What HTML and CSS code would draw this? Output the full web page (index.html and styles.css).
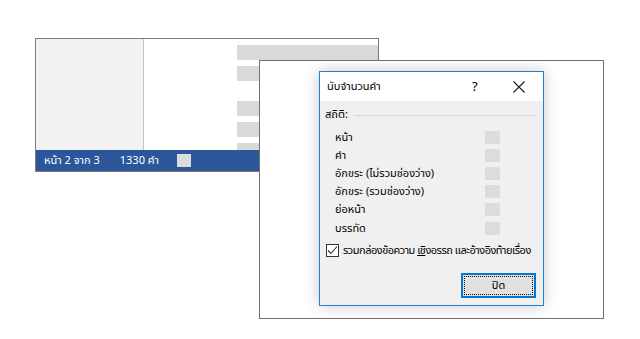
FILE: index.html
```html
<!DOCTYPE html>
<html lang="th">
<head>
  <meta charset="UTF-8">
  <title>นับจำนวนคำ</title>
  <link rel="stylesheet" href="styles.css">
</head>
<body>
  <div class="desk">
    <!-- Word window behind -->
    <div class="win-doc">
      <div class="doc-body">
        <div class="nav-pane"></div>
        <div class="page">
          <div class="bar"></div>
          <div class="bar"></div>
          <div class="bar gap"></div>
          <div class="bar"></div>
          <div class="bar"></div>
        </div>
      </div>
      <div class="status">
        <span class="st-page">หน้า 2 จาก 3</span>
        <span class="st-words">1330 คำ</span>
        <span class="st-box"></span>
      </div>
    </div>

    <!-- second window -->
    <div class="win-back"></div>

    <!-- word count dialog -->
    <div class="dialog">
      <div class="dlg-title">
        <span class="dlg-name">นับจำนวนคำ</span>
        <span class="dlg-help">?</span>
        <svg class="dlg-close" width="12" height="12" viewBox="0 0 12 12">
          <path d="M0.5 0.5 L11.5 11.5 M11.5 0.5 L0.5 11.5" stroke="#1a1a1a" stroke-width="1.1" fill="none"/>
        </svg>
      </div>
      <div class="dlg-body">
        <div class="group-head">
          <span>สถิติ:</span>
          <span class="rule"></span>
        </div>
        <div class="stats">
          <div class="stat"><span>หน้า</span><span class="val"></span></div>
          <div class="stat"><span>คำ</span><span class="val"></span></div>
          <div class="stat"><span>อักขระ (ไม่รวมช่องว่าง)</span><span class="val"></span></div>
          <div class="stat"><span>อักขระ (รวมช่องว่าง)</span><span class="val"></span></div>
          <div class="stat"><span>ย่อหน้า</span><span class="val"></span></div>
          <div class="stat"><span>บรรทัด</span><span class="val"></span></div>
        </div>
        <label class="check">
          <span class="box">
            <svg width="11" height="11" viewBox="0 0 11 11">
              <path d="M1 5.5 L4 8.5 L10 1.5" stroke="#333" stroke-width="1.1" fill="none"/>
            </svg>
          </span>
          <span class="check-text">รวมกล่องข้อความ <u>เชิ</u>งอรรถ และอ้างอิงท้ายเรื่อง</span>
        </label>
        <div class="actions">
          <button class="btn"><span class="focus">ปิด</span></button>
        </div>
      </div>
    </div>
  </div>
</body>
</html>
```

FILE: styles.css
```css
* {
  margin: 0;
  padding: 0;
  box-sizing: border-box;
}

body {
  background: #fff;
  font-family: "Noto Sans Thai", "Leelawadee UI", Tahoma, "DejaVu Sans", sans-serif;
  font-size: 11px;
  color: #000;
}

.desk {
  position: relative;
  width: 640px;
  height: 339px;
  overflow: hidden;
}

/* back document window */
.win-doc {
  position: absolute;
  left: 35px;
  top: 38px;
  width: 344px;
  height: 134px;
  border: 1px solid #7a7a7a;
  display: flex;
  flex-direction: column;
  background: #fff;
}

.doc-body {
  flex: 1;
  display: flex;
  overflow: hidden;
}

.nav-pane {
  width: 108px;
  background: #f2f2f2;
  border-right: 1px solid #c6c6c6;
}

.page {
  flex: 1;
  padding: 6px 0 0 93px;
  display: flex;
  flex-direction: column;
  gap: 6px;
}

.bar {
  height: 15px;
  background: #d9d9d9;
  flex-shrink: 0;
}

.bar.gap {
  margin-top: 14px;
}

.status {
  height: 21px;
  background: #2b579a;
  color: #fff;
  display: flex;
  align-items: center;
  padding-left: 8px;
  font-size: 11px;
}

.st-words {
  margin-left: 20px;
}

.st-box {
  width: 14px;
  height: 13px;
  background: #dcdcdc;
  margin-left: 18px;
}

/* middle window */
.win-back {
  position: absolute;
  left: 259px;
  top: 60px;
  width: 345px;
  height: 259px;
  border: 1px solid #717171;
  background: #fff;
}

/* dialog */
.dialog {
  position: absolute;
  left: 319px;
  top: 71px;
  width: 225px;
  height: 235px;
  border: 1px solid #1c80d6;
  background: #f0f0f0;
  box-shadow: 0 0 14px rgba(0, 0, 0, 0.22);
  display: flex;
  flex-direction: column;
}

.dlg-title {
  height: 29px;
  background: #fff;
  display: flex;
  align-items: center;
  padding-left: 7px;
  font-size: 11px;
}

.dlg-name {
  flex: 1;
}

.dlg-help {
  font-size: 13px;
  width: 14px;
  margin-right: 27px;
}

.dlg-close {
  margin-right: 18px;
}

.dlg-body {
  flex: 1;
  padding: 4px 7px 0 5px;
  display: flex;
  flex-direction: column;
}

.group-head {
  display: flex;
  align-items: center;
  height: 18px;
}

.rule {
  flex: 1;
  height: 1px;
  background: #d7d7d7;
  margin-left: 6px;
  margin-top: 2px;
}

.stats {
  margin-top: 5px;
  padding-left: 10px;
  padding-right: 36px;
}

.stat {
  height: 18.2px;
  display: flex;
  align-items: center;
  justify-content: space-between;
}

.val {
  width: 15px;
  height: 13px;
  background: #dcdcdc;
}

.check {
  display: flex;
  align-items: center;
  margin-top: 5px;
  margin-left: 1px;
  height: 16px;
  gap: 4px;
  font-size: 11px;
  white-space: nowrap;
}

.check-text {
  letter-spacing: -0.5px;
}

.box {
  width: 13px;
  height: 13px;
  flex-shrink: 0;
  border: 1px solid #333;
  background: #fff;
  display: flex;
  align-items: center;
  justify-content: center;
}

.actions {
  display: flex;
  justify-content: flex-end;
  margin-top: 15px;
}

.btn {
  width: 75px;
  height: 25px;
  border: 2px solid #0078d7;
  background: #e1e1e1;
  padding: 1px;
  font-family: inherit;
  font-size: 11px;
  color: #000;
}

.focus {
  display: flex;
  align-items: center;
  justify-content: center;
  height: 100%;
  border: 1px dotted #111;
}
```
